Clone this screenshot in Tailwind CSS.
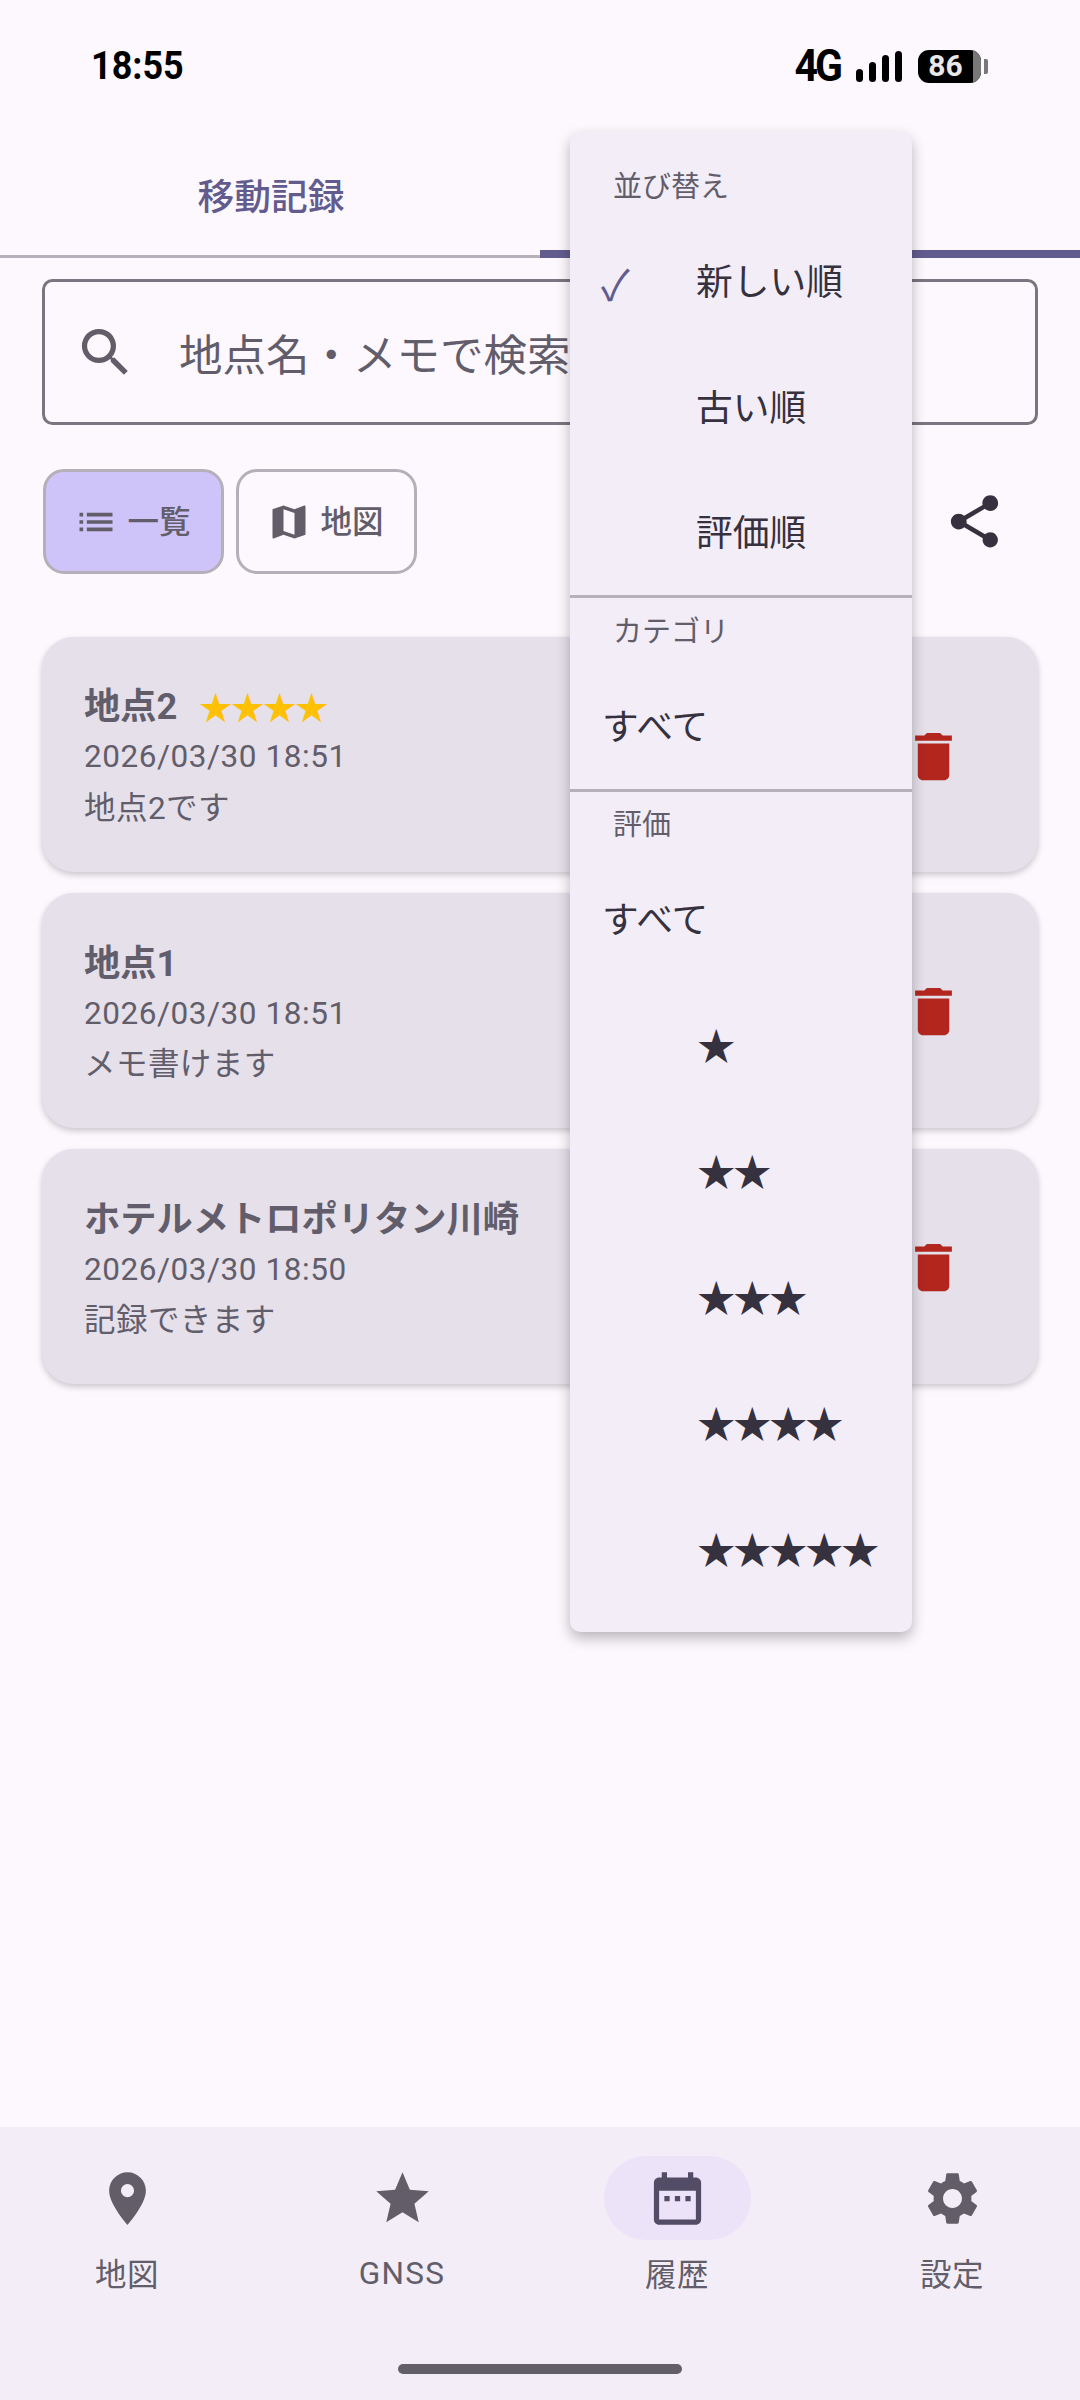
<!doctype html>
<html lang="ja">
<head>
<meta charset="utf-8">
<script src="https://cdn.jsdelivr.net/npm/@tailwindcss/browser@4"></script>
</head>
<body>
<div class="relative w-[1080px] h-[2400px] flex flex-col overflow-hidden bg-[#fdf8fe] font-['Roboto','Noto_Sans_CJK_JP',sans-serif] text-[#625d6a]">

  <!-- status bar -->
  <div class="h-[132px] shrink-0 flex items-center pl-[91px] pr-[92px] text-black">
    <span class="text-[36px] font-bold leading-none scale-y-[1.07]">18:55</span>
    <div class="ml-auto flex items-center">
      <span class="text-[41px] font-bold leading-none tracking-[-3px] mr-[16px] scale-y-[1.08]">4G</span>
      <div class="flex items-end gap-[6px] h-[31px] mr-[16px]">
        <div class="w-[7px] h-[13px] rounded-full bg-black"></div>
        <div class="w-[7px] h-[20px] rounded-full bg-black"></div>
        <div class="w-[7px] h-[27px] rounded-full bg-black"></div>
        <div class="w-[7px] h-[31px] rounded-full bg-black"></div>
      </div>
      <div class="w-[63px] h-[33px] rounded-[11px] bg-black overflow-hidden flex relative">
        <div class="w-[55px] flex items-center justify-center text-[#e8e8e8] text-[30px] font-bold leading-none">86</div>
        <div class="w-[8px] bg-[#787878]"></div>
      </div>
      <div class="w-[4px] h-[15px] ml-[3px] bg-[#787878] rounded-r-[2px]"></div>
    </div>
  </div>

  <!-- tabs -->
  <div class="h-[126px] shrink-0 flex border-b-[3px] border-[#b6b0bb]">
    <div class="w-[540px] flex items-center justify-center pt-[8px] pl-[2px] text-[36.75px] font-medium text-[#625b8e]">移動記録</div>
    <div class="w-[540px] h-[126px] border-b-[8px] border-[#625b8e]"></div>
  </div>

  <!-- search -->
  <div class="mt-[21px] mx-[42px] h-[146px] shrink-0 flex items-center border-[3px] border-[#7a7580] rounded-[10.5px] pl-[29px]">
    <svg class="w-[63px] h-[63px] shrink-0" viewBox="0 0 24 24" fill="#625d68"><path d="M15.5 14h-.79l-.28-.27A6.471 6.471 0 0 0 16 9.500 6.500 6.500 0 1 0 9.500 16c1.610 0 3.090-.59 4.230-1.570l.27.28v.79l5 4.990L20.490 19l-4.990-5zm-6 0C7.010 14 5 11.990 5 9.500S7.010 5 9.500 5 14 7.010 14 9.500 11.990 14 9.500 14z"/></svg>
    <span class="ml-[42px] pt-[9px] text-[43.5px] leading-none whitespace-nowrap">地点名・メモで検索</span>
  </div>

  <!-- view toggle -->
  <div class="mt-[44px] ml-[43px] mr-[74px] h-[105px] shrink-0 flex items-center gap-[12px]">
    <div class="w-[181px] h-[105px] rounded-[21px] border-[3px] border-[#b5afba] bg-[#cfc4f9] flex items-center justify-center gap-[9px] pr-[2px] text-[31.5px] font-medium">
      <svg class="w-[44px] h-[44px]" viewBox="0 0 24 24" fill="#625d68"><path d="M3 13h2v-2H3v2zm0 4h2v-2H3v2zm0-8h2V7H3v2zm4 4h14v-2H7v2zm0 4h14v-2H7v2zM7 7v2h14V7H7z"/></svg>
      <span class="pt-[3px]">一覧</span>
    </div>
    <div class="w-[181px] h-[105px] rounded-[21px] border-[3px] border-[#b5afba] flex items-center justify-center gap-[9px] pr-[2px] text-[31.5px] font-medium">
      <svg class="w-[44px] h-[44px]" viewBox="0 0 24 24" fill="#625d68"><path d="M20.500 3l-.16.03L15 5.100 9 3 3.360 4.900c-.21.07-.36.25-.36.48V20.500c0 .28.22.5.5.5l.16-.03L9 18.900l6 2.100 5.640-1.900c.21-.07.36-.25.36-.48V3.500c0-.28-.22-.5-.5-.5zM15 19l-6-2.110V5l6 2.110V19z"/></svg>
      <span class="pt-[3px]">地図</span>
    </div>
    <svg class="ml-auto w-[63px] h-[63px]" viewBox="0 0 24 24" fill="#35313e"><path d="M18 16.080c-.76 0-1.440.3-1.960.77L8.910 12.700c.05-.23.09-.46.09-.7s-.04-.47-.09-.7l7.050-4.110c.54.5 1.250.81 2.040.81 1.660 0 3-1.340 3-3s-1.340-3-3-3-3 1.340-3 3c0 .24.04.47.09.7L8.040 9.810C7.500 9.310 6.790 9 6 9c-1.660 0-3 1.340-3 3s1.340 3 3 3c.79 0 1.500-.31 2.040-.81l7.120 4.160c-.05.21-.08.43-.08.65 0 1.610 1.310 2.920 2.920 2.920 1.610 0 2.920-1.310 2.920-2.920s-1.310-2.920-2.920-2.920z"/></svg>
  </div>

  <!-- list -->
  <div class="mt-[63px] mx-[42px] flex flex-col gap-[21px]">
    <div class="h-[235px] rounded-[31.5px] bg-[#e5e0ea] shadow-[0_3px_6px_rgba(0,0,0,0.2)] pl-[42px] pr-[73px] pt-[45px] flex justify-between">
      <div>
        <div class="flex items-center h-[50px] text-[36.25px] font-bold leading-[50px]">地点2<span class="ml-[22px] pt-[3px] text-[#ffc107] font-normal tracking-[-1px] text-[33px]">★★★★</span></div>
        <div class="text-[31.5px] tracking-[0.55px] leading-[50px]">2026/03/30 18:51</div>
        <div class="text-[31.5px] tracking-[0.45px] leading-[50px] pt-[2px]">地点2です</div>
      </div>
      <svg class="w-[63px] h-[63px] mt-[43px]" viewBox="0 0 24 24" fill="#b3261e"><path d="M6 19c0 1.100.9 2 2 2h8c1.100 0 2-.9 2-2V7H6v12zM19 4h-3.500l-1-1h-5l-1 1H5v2h14V4z"/></svg>
    </div>
    <div class="h-[235px] rounded-[31.5px] bg-[#e5e0ea] shadow-[0_3px_6px_rgba(0,0,0,0.2)] pl-[42px] pr-[73px] pt-[46px] flex justify-between">
      <div>
        <div class="h-[50px] text-[36.25px] font-bold leading-[50px]">地点1</div>
        <div class="text-[31.5px] tracking-[0.55px] leading-[50px]">2026/03/30 18:51</div>
        <div class="text-[31.5px] tracking-[0.45px] leading-[50px] pt-[1px]">メモ書けます</div>
      </div>
      <svg class="w-[63px] h-[63px] mt-[41px]" viewBox="0 0 24 24" fill="#b3261e"><path d="M6 19c0 1.100.9 2 2 2h8c1.100 0 2-.9 2-2V7H6v12zM19 4h-3.500l-1-1h-5l-1 1H5v2h14V4z"/></svg>
    </div>
    <div class="h-[235px] rounded-[31.5px] bg-[#e5e0ea] shadow-[0_3px_6px_rgba(0,0,0,0.2)] pl-[42px] pr-[73px] pt-[46px] flex justify-between">
      <div>
        <div class="h-[50px] text-[36.25px] font-bold leading-[50px]">ホテルメトロポリタン川崎</div>
        <div class="text-[31.5px] tracking-[0.55px] leading-[50px]">2026/03/30 18:50</div>
        <div class="text-[31.5px] tracking-[0.45px] leading-[50px] pt-[1px]">記録できます</div>
      </div>
      <svg class="w-[63px] h-[63px] mt-[41px]" viewBox="0 0 24 24" fill="#b3261e"><path d="M6 19c0 1.100.9 2 2 2h8c1.100 0 2-.9 2-2V7H6v12zM19 4h-3.500l-1-1h-5l-1 1H5v2h14V4z"/></svg>
    </div>
  </div>

  <!-- bottom nav -->
  <div class="mt-auto h-[273px] shrink-0 bg-[#f3edf7] relative">
    <div class="flex gap-[21px] pt-[29px]">
      <div class="w-[254px] flex flex-col items-center">
        <div class="w-[147px] h-[84px] flex items-center justify-center">
          <svg class="w-[63px] h-[63px]" viewBox="0 0 24 24" fill="#625d68"><path d="M12 2C8.130 2 5 5.130 5 9c0 5.250 7 13 7 13s7-7.750 7-13c0-3.870-3.130-7-7-7zm0 9.500a2.500 2.500 0 0 1 0-5 2.500 2.500 0 0 1 0 5z"/></svg>
        </div>
        <span class="mt-[11px] text-[31.5px] tracking-[0.4px] leading-[50px]">地図</span>
      </div>
      <div class="w-[254px] flex flex-col items-center">
        <div class="w-[147px] h-[84px] flex items-center justify-center">
          <svg class="w-[63px] h-[63px]" viewBox="0 0 24 24" fill="#625d68"><path d="M12 17.270L18.180 21l-1.640-7.030L22 9.240l-7.190-.61L12 2 9.190 8.630 2 9.240l5.460 4.730L5.820 21z"/></svg>
        </div>
        <span class="mt-[9px] text-[31.5px] tracking-[1.3px] leading-[50px]">GNSS</span>
      </div>
      <div class="w-[254px] flex flex-col items-center">
        <div class="w-[147px] h-[84px] rounded-full bg-[#e8def8]/70 flex items-center justify-center">
          <svg class="w-[63px] h-[63px]" viewBox="0 0 24 24" fill="#524c66"><path d="M9 11H7v2h2v-2zm4 0h-2v2h2v-2zm4 0h-2v2h2v-2zm2-7h-1V2h-2v2H8V2H6v2H5c-1.110 0-1.990.9-1.990 2L3 20c0 1.100.89 2 2 2h14c1.100 0 2-.9 2-2V6c0-1.100-.9-2-2-2zm0 16H5V9h14v11z"/></svg>
        </div>
        <span class="mt-[11px] text-[31.5px] tracking-[0.4px] leading-[50px]">履歴</span>
      </div>
      <div class="w-[254px] flex flex-col items-center">
        <div class="w-[147px] h-[84px] flex items-center justify-center">
          <svg class="w-[63px] h-[63px]" viewBox="0 0 24 24" fill="#625d68"><path d="M19.140,12.940c0.040-0.300,0.060-0.610,0.060-0.940c0-0.320-0.020-0.640-0.070-0.940l2.030-1.580c0.180-0.140,0.230-0.410,0.120-0.610l-1.920-3.320c-0.120-0.220-0.370-0.290-0.590-0.220l-2.390,0.960c-0.500-0.380-1.030-0.700-1.620-0.940L14.400,2.810c-0.040-0.240-0.240-0.410-0.480-0.410h-3.840c-0.240,0-0.430,0.170-0.470,0.410L9.250,5.350C8.660,5.590,8.120,5.920,7.630,6.290L5.240,5.330c-0.220-0.080-0.470,0-0.590,0.220L2.740,8.870C2.620,9.080,2.660,9.340,2.860,9.480l2.030,1.580C4.840,11.360,4.800,11.690,4.800,12s0.020,0.640,0.070,0.940l-2.030,1.580c-0.180,0.140-0.230,0.410-0.120,0.610l1.920,3.320c0.120,0.220,0.370,0.290,0.590,0.220l2.390-0.960c0.500,0.380,1.030,0.700,1.620,0.940l0.360,2.540c0.050,0.240,0.240,0.410,0.480,0.410h3.840c0.240,0,0.440-0.170,0.470-0.410l0.360-2.540c0.590-0.240,1.130-0.560,1.620-0.940l2.390,0.960c0.220,0.080,0.470,0,0.590-0.220l1.920-3.320c0.120-0.220,0.070-0.470-0.120-0.610L19.140,12.940z M12,15.600c-1.980,0-3.600-1.620-3.600-3.600s1.620-3.600,3.600-3.600s3.600,1.620,3.600,3.600S13.980,15.600,12,15.600z"/></svg>
        </div>
        <span class="mt-[11px] text-[31.5px] tracking-[0.4px] leading-[50px]">設定</span>
      </div>
    </div>
    <div class="absolute left-[398px] bottom-[26px] w-[284px] h-[10px] rounded-full bg-[#625f66]"></div>
  </div>

  <!-- dropdown menu -->
  <div class="absolute left-[570px] top-[132px] w-[342px] h-[1500px] rounded-[10.5px] bg-[#f3edf7] shadow-[0_6px_14px_rgba(0,0,0,0.28)] pt-[22px] text-[#35313e] text-[36.75px]">
    <div class="h-[65px] pl-[43px] pt-[2px] flex items-center text-[29px] text-[#625d6a]">並び替え</div>
    <div class="h-[126px] flex items-center pl-[31px] pt-[2px]"><span class="w-[95px] text-[#625b8e] text-[42px] -mt-[4px] font-['Noto_Sans_CJK_JP','DejaVu_Sans']">✓</span><span>新しい順</span></div>
    <div class="h-[126px] flex items-center pl-[126px] pt-[2px]">古い順</div>
    <div class="h-[124px] flex items-center pl-[126px] pt-[2px]">評価順</div>
    <div class="h-[3px] bg-[#b6b0bb]"></div>
    <div class="h-[67px] pl-[43px] pt-[2px] flex items-center text-[29px] text-[#625d6a]">カテゴリ</div>
    <div class="h-[124px] flex items-center pl-[32px] pt-[2px]">すべて</div>
    <div class="h-[3px] bg-[#b6b0bb]"></div>
    <div class="h-[66px] pl-[43px] pt-[2px] flex items-center text-[29px] text-[#625d6a]">評価</div>
    <div class="h-[126px] flex items-center pl-[32px]">すべて</div>
    <div class="h-[126px] flex items-center pl-[127px] text-[38.5px] tracking-[-2.5px]">★</div>
    <div class="h-[126px] flex items-center pl-[127px] text-[38.5px] tracking-[-2.5px]">★★</div>
    <div class="h-[126px] flex items-center pl-[127px] text-[38.5px] tracking-[-2.5px]">★★★</div>
    <div class="h-[126px] flex items-center pl-[127px] text-[38.5px] tracking-[-2.5px]">★★★★</div>
    <div class="h-[126px] flex items-center pl-[127px] text-[38.5px] tracking-[-2.5px]">★★★★★</div>
  </div>
</div>
</body>
</html>
